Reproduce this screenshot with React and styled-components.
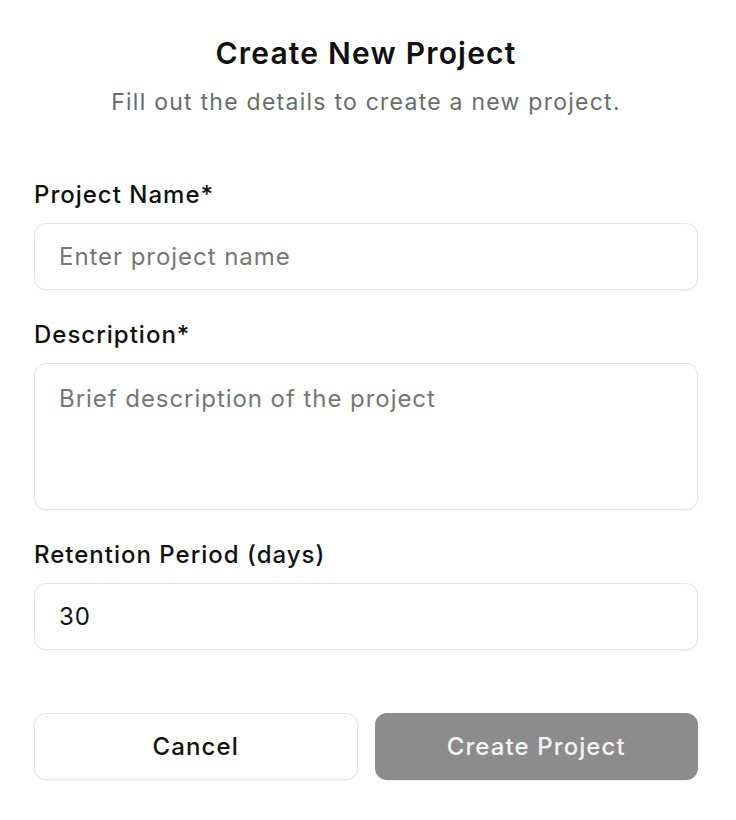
import styled, { createGlobalStyle } from "styled-components";
import { useState } from "react";

const GlobalStyle = createGlobalStyle`
  body {
    margin: 0;
    background: #ffffff;
    font-family: Inter, "Liberation Sans", sans-serif;
    color: #111111;
  }
`;

const Dialog = styled.form`
  padding: 33px 38px 40px 34px;
  display: flex;
  flex-direction: column;
`;

const Title = styled.h1`
  margin: 0;
  text-align: center;
  font-size: 30px;
  line-height: 40px;
  font-weight: 600;
  letter-spacing: 1.2px;
  color: #111111;
`;

const Subtitle = styled.p`
  margin: 13px 0 0;
  text-align: center;
  font-size: 23px;
  line-height: 32px;
  letter-spacing: 1.25px;
  color: #6b6b6b;
`;

const Fields = styled.div`
  margin-top: 62px;
  display: flex;
  flex-direction: column;
  gap: 30px;
`;

const Field = styled.label`
  display: flex;
  flex-direction: column;
  gap: 13px;
`;

const LabelText = styled.span`
  font-size: 24px;
  line-height: 30px;
  font-weight: 500;
  letter-spacing: 1px;
  color: #111111;
`;

const fieldStyle = `
  box-sizing: border-box;
  width: 100%;
  border: 1.5px solid #e4e4e4;
  border-radius: 12px;
  box-shadow: 0 1px 2px rgba(0, 0, 0, 0.06);
  background: #ffffff;
  font-family: Inter, "Liberation Sans", sans-serif;
  font-size: 24px;
  letter-spacing: 0.95px;
  color: #111111;
  padding: 0 24px;
  outline: none;

  &::placeholder {
    color: #767676;
  }
`;

const Input = styled.input`
  ${fieldStyle}
  height: 67px;
`;

const TextArea = styled.textarea`
  ${fieldStyle}
  height: 147px;
  padding-top: 17px;
  line-height: 36px;
  resize: none;
`;

const Actions = styled.div`
  margin-top: 63px;
  display: grid;
  grid-template-columns: 1fr 1fr;
  gap: 17px;
`;

const Button = styled.button`
  height: 67px;
  border-radius: 12px;
  font-family: Inter, "Liberation Sans", sans-serif;
  font-size: 24px;
  font-weight: 500;
  letter-spacing: 1.1px;
  cursor: pointer;
  border: ${(p) => (p.$primary ? "none" : "1.5px solid #e4e4e4")};
  background: ${(p) => (p.$primary ? "#8c8c8c" : "#ffffff")};
  color: ${(p) => (p.$primary ? "#f4f4f4" : "#111111")};
  box-shadow: 0 1px 2px rgba(0, 0, 0, 0.06);
`;

const App = () => {
  const [name, setName] = useState("");
  const [description, setDescription] = useState("");
  const [retention, setRetention] = useState("30");

  return (
    <>
      <GlobalStyle />
      <Dialog onSubmit={(e) => e.preventDefault()}>
        <Title>Create New Project</Title>
        <Subtitle>Fill out the details to create a new project.</Subtitle>
        <Fields>
          <Field>
            <LabelText>Project Name*</LabelText>
            <Input
              placeholder="Enter project name"
              value={name}
              onChange={(e) => setName(e.target.value)}
            />
          </Field>
          <Field>
            <LabelText>Description*</LabelText>
            <TextArea
              placeholder="Brief description of the project"
              value={description}
              onChange={(e) => setDescription(e.target.value)}
            />
          </Field>
          <Field>
            <LabelText>Retention Period (days)</LabelText>
            <Input
              type="text"
              value={retention}
              onChange={(e) => setRetention(e.target.value)}
            />
          </Field>
        </Fields>
        <Actions>
          <Button type="button">Cancel</Button>
          <Button type="submit" $primary disabled={!name || !description}>
            Create Project
          </Button>
        </Actions>
      </Dialog>
    </>
  );
};

export default App;
